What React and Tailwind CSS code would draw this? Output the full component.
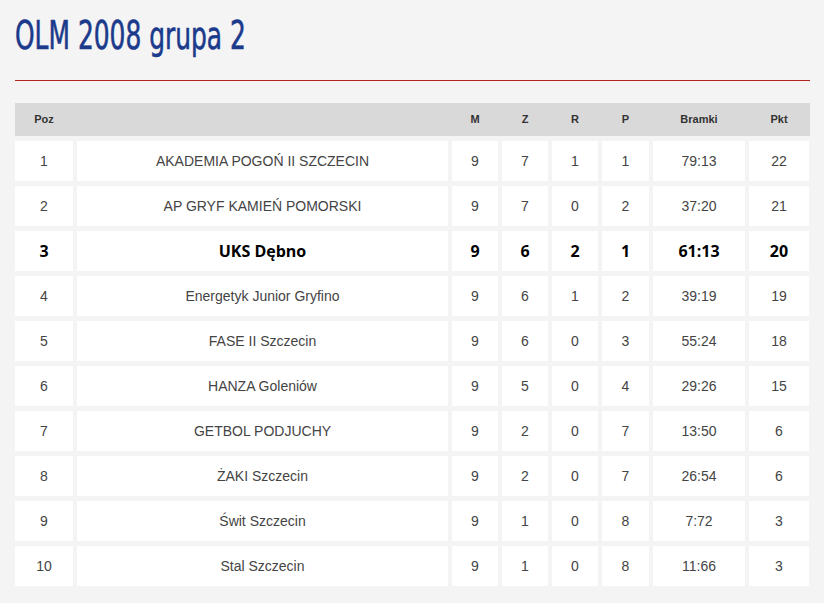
const rows = [
  { poz: 1, name: 'AKADEMIA POGOŃ II SZCZECIN', m: 9, z: 7, r: 1, p: 1, bramki: '79:13', pkt: 22 },
  { poz: 2, name: 'AP GRYF KAMIEŃ POMORSKI', m: 9, z: 7, r: 0, p: 2, bramki: '37:20', pkt: 21 },
  { poz: 3, name: 'UKS Dębno', m: 9, z: 6, r: 2, p: 1, bramki: '61:13', pkt: 20, highlight: true },
  { poz: 4, name: 'Energetyk Junior Gryfino', m: 9, z: 6, r: 1, p: 2, bramki: '39:19', pkt: 19 },
  { poz: 5, name: 'FASE II Szczecin', m: 9, z: 6, r: 0, p: 3, bramki: '55:24', pkt: 18 },
  { poz: 6, name: 'HANZA Goleniów', m: 9, z: 5, r: 0, p: 4, bramki: '29:26', pkt: 15 },
  { poz: 7, name: 'GETBOL PODJUCHY', m: 9, z: 2, r: 0, p: 7, bramki: '13:50', pkt: 6 },
  { poz: 8, name: 'ŻAKI Szczecin', m: 9, z: 2, r: 0, p: 7, bramki: '26:54', pkt: 6 },
  { poz: 9, name: 'Świt Szczecin', m: 9, z: 1, r: 0, p: 8, bramki: '7:72', pkt: 3 },
  { poz: 10, name: 'Stal Szczecin', m: 9, z: 1, r: 0, p: 8, bramki: '11:66', pkt: 3 },
];

const cols = 'grid grid-cols-[58px_371px_46px_46px_46px_47px_92px_60px] gap-x-1';

export default function App() {
  return (
    <div className="min-h-[603px] w-[824px] bg-[#f4f4f4] pl-[15px] pt-[13px] font-['Liberation_Sans',Arial,sans-serif]">
      {/* Title */}
      <h1 className="h-[46px] text-[39px] leading-[46px] text-[#1b3a8b] font-['DejaVu_Sans_Condensed',sans-serif]">
        <span className="inline-block origin-left scale-x-[0.71] whitespace-nowrap [-webkit-text-stroke:0.6px_#1b3a8b]">
          OLM 2008 grupa 2
        </span>
      </h1>
      <div className="mt-[21px] h-px w-[795px] bg-[#b3261e]" />

      {/* Table */}
      <div className="mt-[22px] w-[795px]">
        <div className={`${cols} h-[33px] items-center bg-[#d9d9d9] text-[11px] font-bold text-[#333]`}>
          <div className="text-center">Poz</div>
          <div />
          <div className="text-center">M</div>
          <div className="text-center">Z</div>
          <div className="text-center">R</div>
          <div className="text-center">P</div>
          <div className="text-center">Bramki</div>
          <div className="text-center">Pkt</div>
        </div>

        <div className="mt-[5px] flex flex-col gap-[5px]">
          {rows.map((row) => (
            <div
              key={row.poz}
              className={`${cols} h-[40px] ${
                row.highlight
                  ? "font-['Open_Sans',sans-serif] text-[16px] font-bold text-black"
                  : 'text-[14px] text-[#444]'
              }`}
            >
              {[row.poz, row.name, row.m, row.z, row.r, row.p, row.bramki, row.pkt].map((v, i) => (
                <div key={i} className="flex items-center justify-center bg-white">
                  {v}
                </div>
              ))}
            </div>
          ))}
        </div>
      </div>
    </div>
  );
}
